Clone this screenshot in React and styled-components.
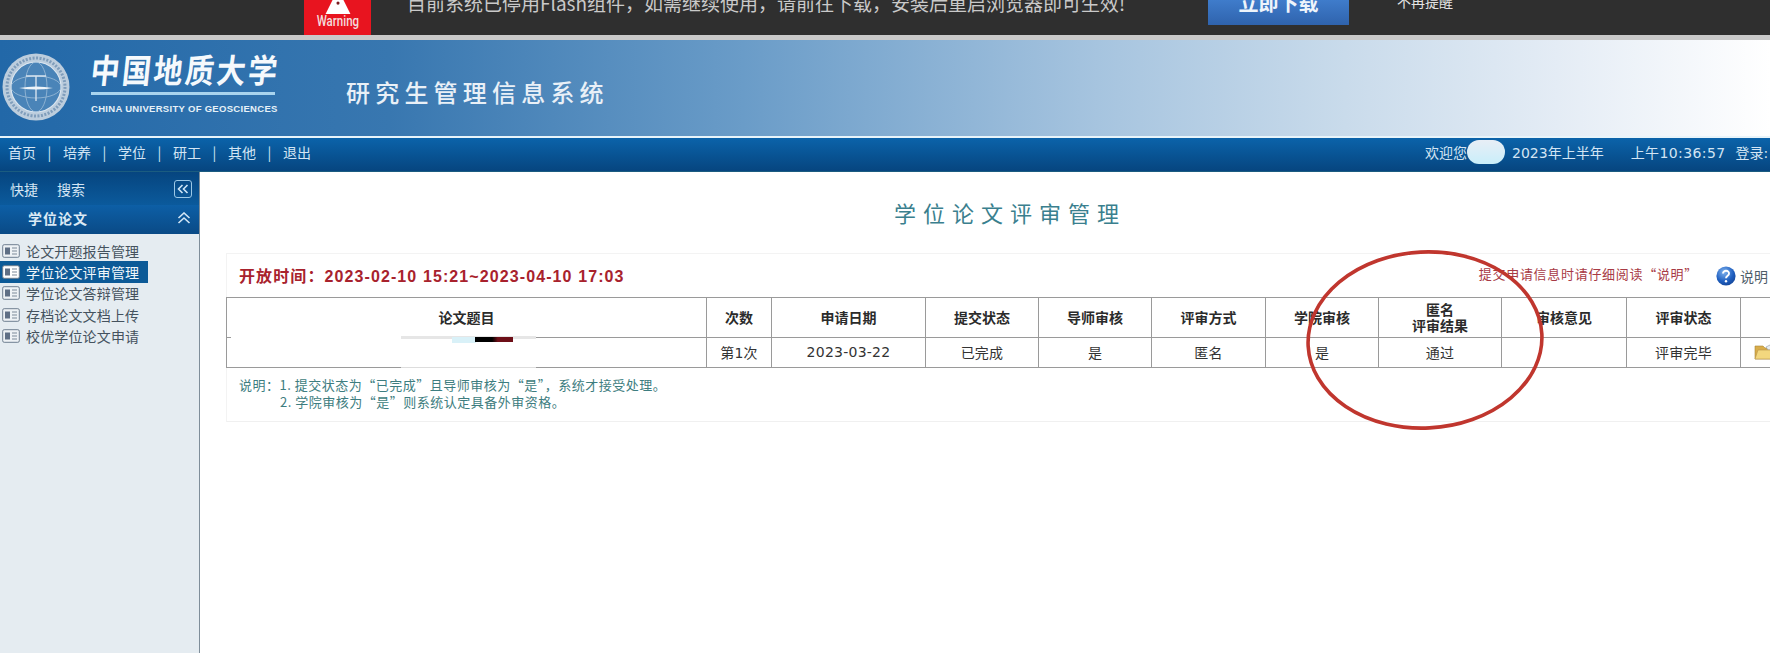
import styled, { createGlobalStyle } from "styled-components";

const navLinks = ["首页", "培养", "学位", "研工", "其他", "退出"];
const sideLinks = ["论文开题报告管理", "学位论文评审管理", "学位论文答辩管理", "存档论文文档上传", "校优学位论文申请"];

const columns = [
  { w: 480, title: "论文题目" },
  { w: 65, title: "次数", value: "第1次" },
  { w: 154, title: "申请日期", value: "2023-03-22" },
  { w: 113, title: "提交状态", value: "已完成" },
  { w: 113, title: "导师审核", value: "是" },
  { w: 114, title: "评审方式", value: "匿名" },
  { w: 113, title: "学院审核", value: "是" },
  { w: 123, title: "匿名\n评审结果", value: "通过" },
  { w: 125, title: "审核意见" },
  { w: 114, title: "评审状态", value: "评审完毕" },
  { w: 50, title: "" },
];

const Seal = () => (
  <SealSvg viewBox="0 0 68 68">
    <circle cx="34" cy="34" r="33.500" fill="#bccddd" />
    <circle cx="34" cy="34" r="25" fill="#4a84b8" stroke="#dbe6f0" strokeWidth="1.2" />
    <circle cx="34" cy="34" r="29" fill="none" stroke="#7f9dbb" strokeWidth="3" strokeDasharray="2 1.5" />
    <ellipse cx="34" cy="34" rx="25" ry="11" fill="none" stroke="#9dbdd8" strokeWidth="0.8" />
    <ellipse cx="34" cy="34" rx="11" ry="25" fill="none" stroke="#9dbdd8" strokeWidth="0.8" />
    <path d="M24 23h20M34 23v25" stroke="#d5e2ee" strokeWidth="1.4" fill="none" />
    <path d="M17 35q17-3 34 0q-17 3-34 0z" fill="#eef4f9" />
  </SealSvg>
);

const PageIcon = ({ $active }) => (
  <svg width="18" height="14" viewBox="0 0 18 14">
    <rect x="0.7" y="0.7" width="16.6" height="12.6" rx="1.5" fill={$active ? "#fff" : "#eef2f5"} stroke="#6f7f90" />
    <rect x="3" y="3.5" width="5" height="7" fill="#5f6f85" />
    <path d="M10 4h5M10 7h5M10 10h5" stroke="#7d8a99" strokeWidth="1.1" />
  </svg>
);

const HelpIcon = () => (
  <svg width="20" height="20" viewBox="0 0 20 20">
    <defs>
      <radialGradient id="helpBall" cx="0.4" cy="0.3" r="0.8">
        <stop offset="0" stopColor="#7fb2ee" />
        <stop offset="0.6" stopColor="#1f5fc0" />
        <stop offset="1" stopColor="#123f8e" />
      </radialGradient>
    </defs>
    <circle cx="10" cy="10" r="9.6" fill="url(#helpBall)" />
    <path d="M7 7.6c0-4 6.4-3.6 6 .2-.2 1.9-3 2-3 4.4" fill="none" stroke="#fff" strokeWidth="1.9" />
    <circle cx="10" cy="15.2" r="1.2" fill="#fff" />
  </svg>
);

const FolderIcon = () => (
  <svg width="24" height="18" viewBox="0 0 24 18">
    <path d="M1 3h8l2 2h9v11H1z" fill="#d9ad4a" stroke="#a98636" strokeWidth="0.6" />
    <path d="M12 4l6-3 4 2v4h-8z" fill="#e9eef2" stroke="#8c99a6" strokeWidth="0.6" />
    <path d="M1 16l3-9h19l-3 9z" fill="#f3d77e" stroke="#b8954a" strokeWidth="0.6" />
  </svg>
);

const App = () => {
  return (
    <Page>
      <GlobalStyle />
      <FlashBar>
        <WarningBox>
          <WarningSign viewBox="0 0 32 18">
            <path d="M16 -14L32 18H0z" fill="#fff" />
            <circle cx="16" cy="4" r="2" fill="#7a1a20" />
          </WarningSign>
          <WarningLabel>Warning</WarningLabel>
        </WarningBox>
        <FlashNotice>目前系统已停用Flash组件，如需继续使用，请前往下载，安装后重启浏览器即可生效!</FlashNotice>
        <DownloadButton>立即下载</DownloadButton>
        <DismissLink>不再提醒</DismissLink>
      </FlashBar>

      <Banner>
        <Seal />
        <LogoBlock>
          <LogoName>中国地质大学</LogoName>
          <LogoRule />
          <LogoEnglish>CHINA UNIVERSITY OF GEOSCIENCES</LogoEnglish>
        </LogoBlock>
        <SystemName>研究生管理信息系统</SystemName>
      </Banner>

      <NavBar>
        <NavLeft>
          {navLinks.map((link, i) => (
            <NavGroup key={link}>
              {i > 0 && <NavDivider>|</NavDivider>}
              <span>{link}</span>
            </NavGroup>
          ))}
        </NavLeft>
        <NavStatus>
          欢迎您
          <NamePill />
          <Term>2023年上半年</Term>
          <Clock>上午10:36:57</Clock>
          <Login>登录:</Login>
        </NavStatus>
      </NavBar>

      <Main>
        <Sidebar>
          <SideTabs>
            <span>快捷</span>
            <span>搜索</span>
            <CollapseBox>
              <svg width="12" height="10" viewBox="0 0 12 10">
                <path d="M5.5 1L1.5 5l4 4M10.5 1l-4 4 4 4" fill="none" stroke="#cfe6f7" strokeWidth="1.6" />
              </svg>
            </CollapseBox>
          </SideTabs>
          <SideHeading>
            学位论文
            <svg width="14" height="12" viewBox="0 0 14 12">
              <path d="M1.5 6L7 1l5.500 5M1.500 11L7 6l5.500 5" fill="none" stroke="#d3e6f5" strokeWidth="1.600" />
            </svg>
          </SideHeading>
          <SideList>
            {sideLinks.map((link, i) => (
              <SideItem key={link} $active={i === 1}>
                <PageIcon $active={i === 1} />
                {link}
              </SideItem>
            ))}
          </SideList>
        </Sidebar>

        <Content>
          <PageTitle>学位论文评审管理</PageTitle>
          <Panel>
            <PanelHead>
              <OpenTime>开放时间：2023-02-10 15:21~2023-04-10 17:03</OpenTime>
              <HintGroup>
                <Hint>提交申请信息时请仔细阅读“说明”</Hint>
                <HelpLink>
                  <HelpIcon />
                  说明
                </HelpLink>
              </HintGroup>
            </PanelHead>
            <Grid>
              <colgroup>
                {columns.map((c, i) => (
                  <GridCol key={i} $w={c.w} />
                ))}
              </colgroup>
              <thead>
                <tr>
                  {columns.map((c, i) => (
                    <HeadCell key={i}>{c.title}</HeadCell>
                  ))}
                </tr>
              </thead>
              <tbody>
                <tr>
                  {columns.map((c, i) => (
                    <BodyCell key={i}>
                      {c.value}
                      {i === 0 && (
                        <>
                          <Smear />
                          <BottomSmear />
                          <Glow />
                          <RedactBar />
                        </>
                      )}
                      {i === 10 && (
                        <FolderSlot>
                          <FolderIcon />
                        </FolderSlot>
                      )}
                    </BodyCell>
                  ))}
                </tr>
              </tbody>
            </Grid>
            <Notes>
              <NoteLine>说明：1. 提交状态为“已完成”且导师审核为“是”，系统才接受处理。</NoteLine>
              <NoteLine $indent>2. 学院审核为“是”则系统认定具备外审资格。</NoteLine>
            </Notes>
          </Panel>
        </Content>
      </Main>

      <HandCircle width="246" height="190" viewBox="0 0 246 190">
        <ellipse cx="123" cy="95" rx="117" ry="88" fill="none" stroke="#c0362e" strokeWidth="3.600" transform="rotate(-3 123 95)" />
      </HandCircle>
    </Page>
  );
};

export default App;

/* ---------------------------- Styled Components --------------------------- */

const GlobalStyle = createGlobalStyle`
  html, body {
    margin: 0;
    padding: 0;
    height: 100%;
    overflow: hidden;
    background: #fff;
  }
  body {
    font-family: "Noto Sans CJK SC", "Liberation Sans", sans-serif;
    font-size: 14px;
  }
`;

const Page = styled.div`
  position: relative;
  width: 1770px;
  height: 653px;
  overflow: hidden;
  display: flex;
  flex-direction: column;
`;

const FlashBar = styled.div`
  flex: none;
  height: 35px;
  box-sizing: content-box;
  background: #2f2f2f;
  border-bottom: 5px solid #c9c9c9;
  display: flex;
  align-items: flex-start;
  overflow: hidden;
  padding-left: 304px;
`;

const WarningBox = styled.div`
  width: 67px;
  height: 35px;
  background: #e8141f;
  display: flex;
  flex-direction: column;
  align-items: center;
`;

const WarningSign = styled.svg`
  width: 32px;
  height: 14px;
  flex: none;
`;

const WarningLabel = styled.span`
  font-family: "Roboto", sans-serif;
  font-size: 14px;
  font-weight: 500;
  line-height: 15px;
  color: #f4dcdc;
  transform: scaleX(0.82);
`;

const FlashNotice = styled.span`
  margin: -9px 0 0 36px;
  width: 720px;
  white-space: nowrap;
  font-size: 19px;
  line-height: 24px;
  color: #c9c9c9;
`;

const DownloadButton = styled.div`
  margin-left: 81px;
  width: 141px;
  height: 25px;
  background: linear-gradient(#3f7ccb, #2f63ad);
  color: #eef4fb;
  font-size: 20px;
  font-weight: 700;
  line-height: 6px;
  text-align: center;
`;

const DismissLink = styled.span`
  margin: -8px 0 0 48px;
  font-size: 14px;
  line-height: 18px;
  color: #e4e4e4;
`;

const Banner = styled.header`
  flex: none;
  height: 96px;
  border-bottom: 2px solid #e8f4fa;
  box-sizing: content-box;
  display: flex;
  align-items: center;
  background: linear-gradient(
    90deg,
    #2268a8 0%,
    #3877b0 22%,
    #6a9cc8 42%,
    #a6c4df 62%,
    #c9dbeb 76%,
    #e4ecf5 88%,
    #ffffff 100%
  );
`;

const SealSvg = styled.svg`
  flex: none;
  width: 68px;
  height: 68px;
  margin: 0 0 2px 2px;
`;

const LogoBlock = styled.div`
  flex: none;
  width: 188px;
  margin: 0 0 13px 21px;
  display: flex;
  flex-direction: column;
`;

const LogoName = styled.div`
  font-size: 29px;
  font-weight: 700;
  line-height: 38px;
  letter-spacing: 2.500px;
  white-space: nowrap;
  color: #f5f9fc;
  transform: skewX(-6deg) scaleY(1.15);
`;

const LogoRule = styled.div`
  height: 3px;
  margin-top: 5px;
  width: 184px;
  background: #a9d4ee;
`;

const LogoEnglish = styled.div`
  margin-top: 8px;
  font-family: "Liberation Sans", sans-serif;
  font-size: 9.500px;
  font-weight: 700;
  line-height: 12px;
  white-space: nowrap;
  letter-spacing: 0.300px;
  color: #e6f1f8;
`;

const SystemName = styled.div`
  margin: 8px 0 0 67px;
  font-size: 24px;
  font-weight: 500;
  line-height: 32px;
  letter-spacing: 5.200px;
  white-space: nowrap;
  color: #e9f0f7;
`;

const NavBar = styled.nav`
  flex: none;
  height: 34px;
  box-sizing: border-box;
  padding-bottom: 5px;
  border-bottom: 1px solid #1b5c80;
  background: linear-gradient(#0b63aa, #06457f);
  display: flex;
  align-items: center;
  overflow: hidden;
  color: #d3e5f4;
  white-space: nowrap;
`;

const NavLeft = styled.div`
  flex: 0 0 1425px;
  display: flex;
  padding-left: 8px;
  box-sizing: border-box;
`;

const NavGroup = styled.div`
  display: flex;
  font-size: 14px;
`;

const NavDivider = styled.span`
  width: 27px;
  text-align: center;
`;

const NavStatus = styled.div`
  flex: none;
  display: flex;
  align-items: center;
  font-size: 14px;
  font-family: "DejaVu Sans", "Noto Sans CJK SC", sans-serif;
`;

const NamePill = styled.span`
  width: 38px;
  height: 24px;
  border-radius: 12px;
  background: linear-gradient(#e8eef6, #c9eefa);
`;

const Term = styled.span`
  margin-left: 7px;
`;

const Clock = styled.span`
  margin-left: 27px;
  letter-spacing: 0.400px;
`;

const Login = styled.span`
  margin-left: 10px;
`;

const Main = styled.div`
  flex: 1;
  display: flex;
  min-height: 0;
`;

const Sidebar = styled.aside`
  flex: 0 0 200px;
  display: flex;
  flex-direction: column;
  box-sizing: border-box;
  background: #e5ecf1;
  border-right: 1px solid #7f8e9a;
`;

const SideTabs = styled.div`
  flex: none;
  height: 33px;
  display: flex;
  align-items: center;
  gap: 19px;
  padding: 0 7px 0 10px;
  background: linear-gradient(#06457f, #0b5a9c);
  color: #d3e5f4;
  font-size: 14px;
`;

const CollapseBox = styled.span`
  margin-left: auto;
  width: 18px;
  height: 18px;
  box-sizing: border-box;
  border: 1px solid #9cc8e6;
  border-radius: 3px;
  display: flex;
  align-items: center;
  justify-content: center;
`;

const SideHeading = styled.div`
  flex: none;
  height: 29px;
  padding: 0 8px 3px 28px;
  box-sizing: border-box;
  display: flex;
  align-items: center;
  justify-content: space-between;
  background: linear-gradient(#0d5fa6, #0a4a86);
  color: #dbe9f5;
  font-size: 14px;
  font-weight: 700;
  letter-spacing: 1px;
`;

const SideList = styled.ul`
  list-style: none;
  margin: 0;
  padding: 6px 0 0;
`;

const SideItem = styled.li`
  width: 148px;
  height: 21.300px;
  display: flex;
  align-items: center;
  gap: 6px;
  padding-left: 2px;
  box-sizing: border-box;
  font-size: 14px;
  letter-spacing: 0.150px;
  white-space: nowrap;
  color: ${props => (props.$active ? "#f2f7fb" : "#44525e")};
  background: ${props => (props.$active ? "#0c5a97" : "transparent")};
`;

const Content = styled.main`
  flex: none;
  width: 1612px;
  padding-left: 26px;
  box-sizing: border-box;
`;

const PageTitle = styled.h1`
  margin: 20px 0 21px -18px;
  height: 40px;
  font-size: 22px;
  font-weight: 400;
  line-height: 40px;
  letter-spacing: 7px;
  text-align: center;
  color: #3a7f8e;
`;

const Panel = styled.section`
  width: 1564px;
  height: 169px;
  box-sizing: border-box;
  border-top: 1px solid #f3f3f3;
  border-bottom: 1px solid #f0f0f0;
  border-left: 1px solid #f3f3f3;
`;

const PanelHead = styled.div`
  height: 43px;
  display: flex;
  align-items: center;
  justify-content: space-between;
  padding: 0 22px 0 12px;
`;

const OpenTime = styled.div`
  font-family: "Liberation Sans", "Noto Sans CJK SC", sans-serif;
  font-size: 16px;
  font-weight: 700;
  letter-spacing: 1.100px;
  margin-bottom: 2px;
  color: #a8222d;
`;

const HintGroup = styled.div`
  display: flex;
  align-items: center;
  gap: 18px;
`;

const Hint = styled.span`
  margin-bottom: 4px;
  font-size: 13px;
  letter-spacing: 0.700px;
  color: #a83a45;
`;

const HelpLink = styled.span`
  display: flex;
  align-items: center;
  gap: 4px;
  font-size: 14px;
  color: #4e5d68;
`;

const Grid = styled.table`
  width: 1564px;
  margin-left: -1px;
  table-layout: fixed;
  border-collapse: collapse;
  font-family: "DejaVu Sans", "Noto Sans CJK SC", sans-serif;
`;

const GridCol = styled.col`
  width: ${props => props.$w}px;
`;

const HeadCell = styled.th`
  height: 39px;
  padding: 0;
  border: 1px solid #9a9a9a;
  font-size: 14px;
  line-height: 16px;
  font-weight: 700;
  white-space: pre-line;
  color: #2b2b2b;
`;

const BodyCell = styled.td`
  position: relative;
  height: 30px;
  padding: 0 0 2px;
  box-sizing: border-box;
  border: 1px solid #9a9a9a;
  font-size: 14px;
  letter-spacing: 0.250px;
  text-align: center;
  color: #333;
`;

const Smear = styled.span`
  position: absolute;
  left: 4px;
  top: -2px;
  width: 305px;
  height: 3px;
  background: linear-gradient(90deg, #fff 0 170px, #e6e6e6 170px 100%);
`;

const BottomSmear = styled.span`
  position: absolute;
  left: 174px;
  bottom: -1px;
  width: 135px;
  height: 1px;
  background: #ddd;
`;

const Glow = styled.span`
  position: absolute;
  left: 225px;
  top: -1px;
  width: 24px;
  height: 6px;
  background: #d9f1f8;
`;

const RedactBar = styled.span`
  position: absolute;
  left: 248px;
  top: -1px;
  width: 38px;
  height: 5px;
  background: linear-gradient(90deg, #000 0 45%, #6d0f18 60% 100%);
`;

const FolderSlot = styled.span`
  position: absolute;
  left: 13px;
  top: 5px;
  line-height: 0;
`;

const Notes = styled.div`
  padding: 8px 0 0 12px;
  font-size: 13px;
  line-height: 17px;
  letter-spacing: 0.500px;
  color: #3d7d80;
`;

const NoteLine = styled.div`
  padding-left: ${props => (props.$indent ? "41px" : "0")};
  white-space: nowrap;
`;

const HandCircle = styled.svg`
  position: absolute;
  left: 1302px;
  top: 245px;
  pointer-events: none;
`;
